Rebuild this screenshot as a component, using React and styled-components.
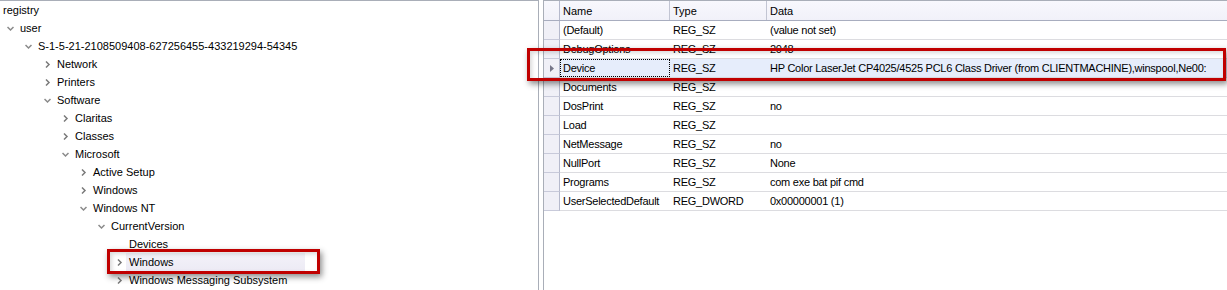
import React from 'react';
import styled, { createGlobalStyle } from 'styled-components';

const GlobalStyle = createGlobalStyle`
  html, body {
    margin: 0;
    padding: 0;
    background: #ffffff;
  }
  body {
    font-family: "Liberation Sans", Arial, sans-serif;
    font-size: 11px;
    color: #000000;
  }
`;

// x of the label text for each tree depth
const levelX = [3, 20, 38, 57, 75, 93, 111, 129];

const treeItems = [
  { level: 0, label: 'registry' },
  { level: 1, label: 'user', state: 'open' },
  { level: 2, label: 'S-1-5-21-2108509408-627256455-433219294-54345', state: 'open' },
  { level: 3, label: 'Network', state: 'closed' },
  { level: 3, label: 'Printers', state: 'closed' },
  { level: 3, label: 'Software', state: 'open' },
  { level: 4, label: 'Claritas', state: 'closed' },
  { level: 4, label: 'Classes', state: 'closed' },
  { level: 4, label: 'Microsoft', state: 'open' },
  { level: 5, label: 'Active Setup', state: 'closed' },
  { level: 5, label: 'Windows', state: 'closed' },
  { level: 5, label: 'Windows NT', state: 'open' },
  { level: 6, label: 'CurrentVersion', state: 'open' },
  { level: 7, label: 'Devices' },
  { level: 7, label: 'Windows', state: 'closed', hover: true },
  { level: 7, label: 'Windows Messaging Subsystem', state: 'closed' },
];

const values = [
  { name: '(Default)', type: 'REG_SZ', data: '(value not set)' },
  { name: 'DebugOptions', type: 'REG_SZ', data: '2048' },
  {
    name: 'Device',
    type: 'REG_SZ',
    data: 'HP Color LaserJet CP4025/4525 PCL6 Class Driver (from CLIENTMACHINE),winspool,Ne00:',
    selected: true,
  },
  { name: 'Documents', type: 'REG_SZ', data: '' },
  { name: 'DosPrint', type: 'REG_SZ', data: 'no' },
  { name: 'Load', type: 'REG_SZ', data: '' },
  { name: 'NetMessage', type: 'REG_SZ', data: 'no' },
  { name: 'NullPort', type: 'REG_SZ', data: 'None' },
  { name: 'Programs', type: 'REG_SZ', data: 'com exe bat pif cmd' },
  { name: 'UserSelectedDefault', type: 'REG_DWORD', data: '0x00000001 (1)' },
];

const Chevron = ({ state }) => (
  <ChevronBox>
    {state === 'open' && (
      <svg width="7" height="7" viewBox="0 0 7 7">
        <polyline points="0.5,2 3.5,5 6.5,2" fill="none" stroke="#8a8a8a" strokeWidth="1.5" />
      </svg>
    )}
    {state === 'closed' && (
      <svg width="7" height="7" viewBox="0 0 7 7">
        <polyline points="2,0.5 5,3.5 2,6.5" fill="none" stroke="#7a7a7a" strokeWidth="1.5" />
      </svg>
    )}
  </ChevronBox>
);

const Tree = () => (
  <TreeList>
    {treeItems.map((item, i) => (
      <TreeRow key={`${item.label}_${i}`} $indent={item.level === 0 ? 3 : levelX[item.level] - 13}>
        {item.level > 0 && <Chevron state={item.state} />}
        <TreeLabel $hover={item.hover}>{item.label}</TreeLabel>
      </TreeRow>
    ))}
  </TreeList>
);

const ValueGrid = () => (
  <Grid>
    <HeaderRow>
      <RowHead $header />
      <HeadCell $w={110}>Name</HeadCell>
      <HeadCell $w={97}>Type</HeadCell>
      <HeadCell>Data</HeadCell>
    </HeaderRow>
    {values.map(v => (
      <DataRow key={v.name} $selected={v.selected}>
        <RowHead>
          {v.selected && (
            <svg width="4" height="7" viewBox="0 0 4 7">
              <polygon points="0,0 4,3.5 0,7" fill="#767688" />
            </svg>
          )}
        </RowHead>
        <Cell $w={110} $focus={v.selected}>{v.name}</Cell>
        <Cell $w={97}>{v.type}</Cell>
        <Cell>{v.data}</Cell>
      </DataRow>
    ))}
  </Grid>
);

const App = () => (
  <Page>
    <GlobalStyle />
    <LeftPane>
      <Tree />
    </LeftPane>
    <Splitter />
    <RightPane>
      <ValueGrid />
    </RightPane>
    <Callout $x={527} $y={48} $w={699} $h={33} />
    <Callout $x={107} $y={249} $w={213} $h={25} />
  </Page>
);

export default App;

const Page = styled.div`
  position: relative;
  display: flex;
  width: 1227px;
  height: 290px;
  overflow: hidden;
  background: #ffffff;
`;

const LeftPane = styled.div`
  width: 539px;
  height: 100%;
  border-top: 1px solid #a9aeb8;
  border-right: 1px solid #a9aeb8;
  box-sizing: border-box;
`;

const Splitter = styled.div`
  width: 4px;
  height: 100%;
  background: #ffffff;
`;

const RightPane = styled.div`
  flex: 1;
  height: 100%;
  border-top: 1px solid #a9aeb8;
  border-left: 1px solid #a9aeb8;
  box-sizing: border-box;
`;

const TreeList = styled.div`
  display: flex;
  flex-direction: column;
`;

const TreeRow = styled.div`
  display: flex;
  align-items: center;
  height: 18px;
  padding-left: ${({ $indent }) => $indent}px;
  white-space: nowrap;
`;

const ChevronBox = styled.span`
  display: inline-flex;
  align-items: center;
  justify-content: center;
  width: 7px;
  height: 7px;
  margin-right: 6px;
`;

const TreeLabel = styled.span`
  display: inline-flex;
  align-items: center;
  height: 19px;
  padding-left: 3px;
  margin-left: -3px;
  ${({ $hover }) =>
    $hover &&
    `
    width: 179px;
    box-sizing: border-box;
    background: linear-gradient(#f3f2f9, #eceaf4);
  `}
`;

const Grid = styled.div`
  display: flex;
  flex-direction: column;
`;

const HeaderRow = styled.div`
  display: flex;
  height: 19px;
  border-bottom: 1px solid #a8adbf;
  background: linear-gradient(#f8f8fd, #f1f1f9);
`;

const DataRow = styled.div`
  display: flex;
  height: 18px;
  border-bottom: 1px solid #dcdce0;
  background: ${({ $selected }) => ($selected ? '#e6edfb' : '#ffffff')};
`;

const RowHead = styled.div`
  display: flex;
  align-items: center;
  justify-content: center;
  flex: 0 0 15px;
  border-right: 1px solid #b5b9cc;
  background: ${({ $header }) => ($header ? 'transparent' : '#f0f0f7')};
  margin-bottom: ${({ $header }) => ($header ? 0 : -1)}px;
  border-bottom: ${({ $header }) => ($header ? 'none' : '1px solid #c8cada')};
`;

const HeadCell = styled.div`
  display: flex;
  align-items: center;
  flex: ${({ $w }) => ($w ? `0 0 ${$w}px` : '1')};
  padding-left: 3px;
  box-sizing: border-box;
  border-right: ${({ $w }) => ($w ? '1px solid #c2c5d3' : 'none')};
  white-space: nowrap;
`;

const Cell = styled.div`
  display: flex;
  align-items: center;
  flex: ${({ $w }) => ($w ? `0 0 ${$w}px` : '1')};
  padding-left: 3px;
  box-sizing: border-box;
  white-space: nowrap;
  overflow: hidden;
  letter-spacing: -0.25px;
  ${({ $focus }) =>
    $focus &&
    `
    outline: 1px dotted #000000;
    outline-offset: -1px;
  `}
`;

const Callout = styled.div`
  position: absolute;
  left: ${({ $x }) => $x}px;
  top: ${({ $y }) => $y}px;
  width: ${({ $w }) => $w}px;
  height: ${({ $h }) => $h}px;
  box-sizing: border-box;
  border: 3px solid #c00000;
  box-shadow: 2px 3px 6px rgba(0, 0, 0, 0.45), inset 2px 2px 4px rgba(0, 0, 0, 0.15);
  pointer-events: none;
`;
